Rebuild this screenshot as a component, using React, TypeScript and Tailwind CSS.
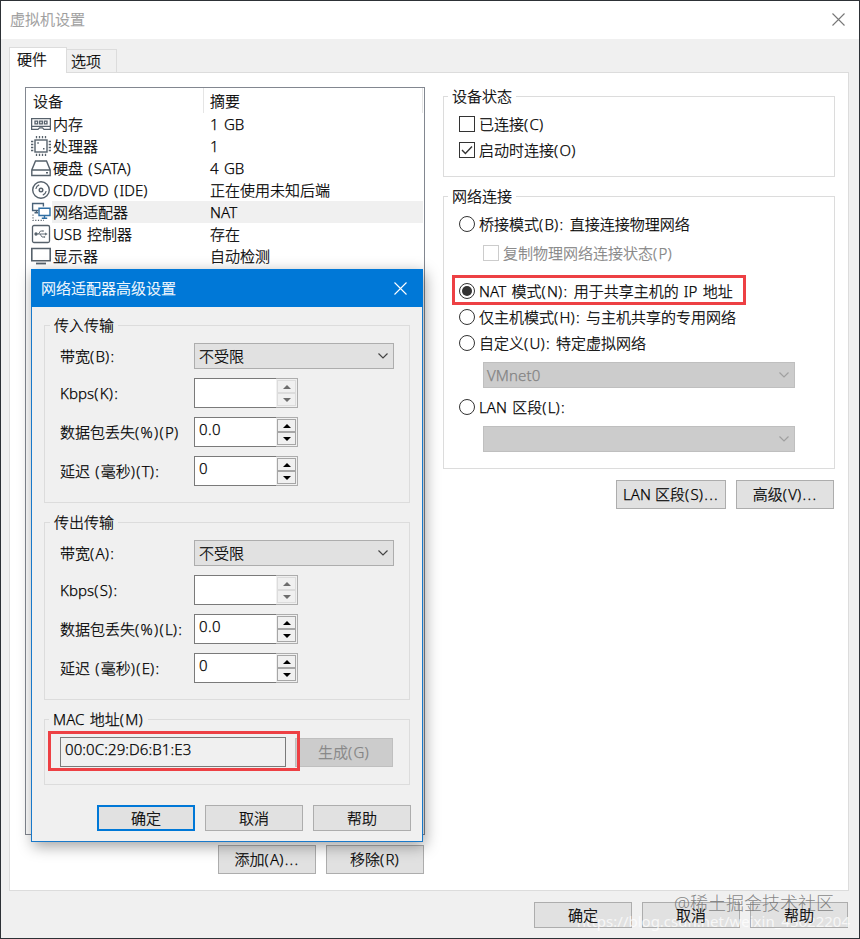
import type { ReactNode } from 'react';

/** Sets Latin runs and punctuation a little wider than the ideographs around them. */
function Text({ children, className = '' }: { children: string; className?: string }) {
  const runs = children.split(/([()]+:?|\.\.\.|%|[A-Za-z0-9/:]+)/).filter(Boolean);
  return (
    <span className={`whitespace-pre ${className}`}>
      {runs.map((run, i) => {
        if (/^([()]+:?|\.\.\.|%)$/.test(run)) return <span key={i} className="tracking-[1.3px]">{run}</span>;
        if (/^[A-Za-z0-9/:.]+$/.test(run)) return <span key={i} className="tracking-[0.1px]">{run}</span>;
        return run;
      })}
    </span>
  );
}

function Button({ children, className }: { children: string; className: string }) {
  return (
    <button className={`flex shrink-0 items-center justify-center whitespace-nowrap ${className}`}>
      <Text className="relative z-10">{children}</Text>
    </button>
  );
}

function Group({ title, legend, className, children }: { title: string; legend: string; className: string; children: ReactNode }) {
  return (
    <section className={`flex shrink-0 flex-col border ${className}`}>
      <h2 className={`-mt-[11px] h-5 self-start px-1 leading-5 ${legend}`}><Text>{title}</Text></h2>
      {children}
    </section>
  );
}

function Chevron({ color }: { color: string }) {
  return (
    <svg width="12" height="8" viewBox="0 0 12 8" fill="none" stroke={color} strokeWidth="1.2">
      <path d="M1.5 1.5 6 6l4.5-4.5" />
    </svg>
  );
}

function Select({ value, className, color }: { value: string; className: string; color: string }) {
  return (
    <div className={`flex h-[26px] shrink-0 items-center justify-between border pr-1 ${className}`}>
      <Text>{value}</Text>
      <Chevron color={color} />
    </div>
  );
}

function Arrow({ up, disabled }: { up: boolean; disabled: boolean }) {
  return (
    <span className={`flex flex-1 items-center justify-center border ${disabled ? 'border-[#dcdcdc] bg-[#f0f0f0]' : 'border-[#a6a6a6] bg-[#f0f0f0]'}`}>
      <svg width="8" height="4" viewBox="0 0 8 4" fill={disabled ? '#6d6d6d' : '#000'}>
        <path d={up ? 'M0 4 4 0l4 4z' : 'M0 0h8L4 4z'} />
      </svg>
    </span>
  );
}

function Spinner({ value, disabled = false }: { value: string; disabled?: boolean }) {
  return (
    <div className="flex h-[30px] w-[104px]">
      <span className="w-[82px] border border-r-0 border-[#7a7a7a] bg-white pl-1 leading-[22px] tracking-[0.4px]">{value}</span>
      <span className="flex w-[22px] flex-col border border-l-0 border-[#adadad] bg-[#f0f0f0] p-px">
        <Arrow up disabled={disabled} />
        <Arrow up={false} disabled={disabled} />
      </span>
    </div>
  );
}

function Transfer({ title, labels, className }: { title: string; labels: string[]; className: string }) {
  return (
    <Group title={title} legend="ml-[5px] bg-[#f0f0f0]" className={`h-[178px] w-[366px] border-[#dcdcdc] ${className}`}>
      <div className="mt-2 ml-[15px] flex flex-col">
        <div className="flex h-[26px] items-center">
          <Text className="w-[134px]">{labels[0]}</Text>
          <Select value="不受限" color="#444" className="w-[200px] border-[#adadad] bg-[#e1e1e1] pl-1" />
        </div>
        <div className="mt-[9px] flex h-[30px] items-center">
          <Text className="w-[134px]">{labels[1]}</Text>
          <Spinner value="" disabled />
        </div>
        <div className="mt-[9px] flex h-[30px] items-center">
          <Text className="w-[134px]">{labels[2]}</Text>
          <Spinner value="0.0" />
        </div>
        <div className="mt-[9px] flex h-[30px] items-center">
          <Text className="w-[134px]">{labels[3]}</Text>
          <Spinner value="0" />
        </div>
      </div>
    </Group>
  );
}

function Box({ checked = false, disabled = false }: { checked?: boolean; disabled?: boolean }) {
  return (
    <span className={`flex size-4 shrink-0 items-center justify-center border bg-white ${disabled ? 'border-[#ccc]' : 'border-[#333]'}`}>
      {checked && (
        <svg width="14" height="14" viewBox="0 0 14 14" fill="none" stroke="#333" strokeWidth="1.4">
          <path d="m2 7 3.4 3.4L12 3.6" />
        </svg>
      )}
    </span>
  );
}

function Radio({ checked = false }: { checked?: boolean }) {
  return (
    <span className="flex size-4 shrink-0 items-center justify-center rounded-full border border-[#333] bg-white">
      {checked && <span className="size-[10px] rounded-full bg-[#333]" />}
    </span>
  );
}

function Option({ control, text, className }: { control: ReactNode; text: string; className: string }) {
  return (
    <label className={`flex h-5 shrink-0 items-center gap-1 whitespace-nowrap ${className}`}>
      {control}
      <Text>{text}</Text>
    </label>
  );
}

const stroke = '#56616b';

const icons: Record<string, ReactNode> = {
  memory: (
    <g strokeWidth="1.3">
      <path d="M.6 4.6h18.8v10.8h-6.4l-1.5-1.6h-3L7 15.4H.6zM1 12.4h18" />
      <path d="M4 7.2h2.6v2.6H4zM8.7 7.2h2.6v2.6H8.7zM13.4 7.2H16v2.6h-2.6z" />
    </g>
  ),
  cpu: (
    <g>
      <rect x="4" y="4" width="12" height="12" />
      <path strokeWidth="1.3" d="M5.5 0v2.3M8.5 0v2.3M11.5 0v2.3M14.5 0v2.3M5.5 17.7V20M8.5 17.7V20M11.5 17.7V20M14.5 17.7V20M0 5.5h2.3M0 8.5h2.3M0 11.5h2.3M0 14.5h2.3M17.7 5.5H20M17.7 8.5H20M17.7 11.5H20M17.7 14.5H20" />
      <path d="M6.3 7h1.5M12 12.7h1.5" />
    </g>
  ),
  disk: (
    <g strokeWidth="1.4">
      <path d="M4.5 3h11L19.2 12v5.5H.8V12zM1 12h18" />
      <path d="M15 14.8h2" />
    </g>
  ),
  cd: (
    <g strokeWidth="1.4">
      <circle cx="10" cy="10" r="8.3" />
      <circle cx="10" cy="10" r="1.8" />
      <path strokeWidth="1.2" d="M4.8 8.8A5.4 5.4 0 0 1 8.2 4.9M15.2 11.2A5.4 5.4 0 0 1 11.8 15.1" />
    </g>
  ),
  network: (
    <g strokeWidth="1.4">
      <path stroke="#4a6278" d="M7.5 8.5H1.6v-7h10.8v3M3.5 10.7h3.5M5.5 8.5v2" />
      <path stroke="#2f6ea3" d="M8 6.2h11v7.3H8zM13.5 13.5v2.6M10.8 16.3h5.4" />
      <path strokeWidth="1.1" strokeDasharray="1.2 1.5" d="M2 12.5v5.9h11" />
    </g>
  ),
  usb: (
    <g strokeWidth="1.3">
      <rect x="1.5" y="1.5" width="17" height="17" rx="1.5" />
      <path strokeWidth=".9" d="M5 10h10M7.5 10l2-3h2M9 10l2 3h2" />
      <circle cx="5" cy="10" r="1" fill={stroke} />
      <path fill={stroke} d="m14.3 8.7 2 1.3-2 1.3zM11.5 6.5h1v1h-1zM13 12.5h1v1h-1z" strokeWidth=".3" />
    </g>
  ),
  display: (
    <g>
      <path strokeWidth="1.6" d="M.8 2.5h18.4v12.2H.8z" />
      <path strokeWidth="1.8" d="M5 17.5h10" />
    </g>
  ),
};

const devices = [
  ['memory', '内存', '1 GB'],
  ['cpu', '处理器', '1'],
  ['disk', '硬盘 (SATA)', '4 GB'],
  ['cd', 'CD/DVD (IDE)', '正在使用未知后端'],
  ['network', '网络适配器', 'NAT'],
  ['usb', 'USB 控制器', '存在'],
  ['display', '显示器', '自动检测'],
];

function DeviceList() {
  return (
    <div className="flex h-[748px] w-[400px] shrink-0 flex-col border border-[#828790] bg-white pr-px">
      <div className="flex h-[25px] items-center">
        <span className="flex h-full w-[178px] items-center border-r border-[#e5e5e5] pt-px pl-[7px]">设备</span>
        <span className="flex h-full flex-1 items-center border-r border-[#e5e5e5] pt-px pl-[6px]">摘要</span>
      </div>
      {devices.map(([icon, name, summary]) => (
        <div key={icon} className="flex h-[22px] items-center pl-[5px]">
          <svg className="mr-px shrink-0" width="20" height="20" viewBox="0 0 20 20" fill="none" stroke={stroke} strokeWidth="1.4">
            {icons[icon]}
          </svg>
          <div className={`flex h-full flex-1 items-center pl-px ${icon === 'network' ? 'bg-[#f0f0f0]' : ''}`}>
            <Text className="w-[157px]">{name}</Text>
            <Text>{summary}</Text>
          </div>
        </div>
      ))}
    </div>
  );
}

const plain = 'border border-[#adadad] bg-[#e1e1e1] w-[98px]';

function AdvancedDialog() {
  return (
    <div className="absolute top-[268px] left-[30px] flex h-[573px] w-[392px] flex-col border border-[#1979ca] bg-[#f0f0f0] shadow-[2px_4px_14px_rgba(0,0,0,0.38)]">
      <div className="-mx-px -mt-px flex h-[38px] shrink-0 items-center justify-between bg-[#0078d7] pr-4 pl-[10px] text-white">
        <span>网络适配器高级设置</span>
        <svg width="13" height="13" viewBox="0 0 13 13" stroke="#fff" strokeWidth="1.1">
          <path d="m.5.5 12 12M12.5.5l-12 12" />
        </svg>
      </div>
      <Transfer title="传入传输" labels={['带宽(B):', 'Kbps(K):', '数据包丢失(%)(P)', '延迟 (毫秒)(T):']} className="mt-[18px] ml-3" />
      <Transfer title="传出传输" labels={['带宽(A):', 'Kbps(S):', '数据包丢失(%)(L):', '延迟 (毫秒)(E):']} className="mt-[19px] ml-3" />
      <Group title="MAC 地址(M)" legend="ml-1 bg-[#f0f0f0]" className="mt-[19px] ml-3 h-[66px] w-[366px] border-[#dcdcdc]">
        <div className="mt-2 ml-[15px] flex items-start">
          <span className="h-[30px] w-[226px] border border-[#7a7a7a] pl-1 leading-[23px]"><Text>00:0C:29:D6:B1:E3</Text></span>
          <Button className="mt-px ml-[9px] h-[29px] w-[98px] border border-[#bfbfbf] bg-[#ccc] pb-[2px] text-[#838383]">生成(G)</Button>
        </div>
      </Group>
      <div className="mt-5 mr-[11px] flex justify-end gap-[10px]">
        <Button className="h-[26px] w-[98px] border-2 border-[#0078d7] bg-[#e1e1e1]">确定</Button>
        <Button className={`h-[26px] ${plain}`}>取消</Button>
        <Button className={`h-[26px] ${plain}`}>帮助</Button>
      </div>
      <div className="absolute top-[461px] left-4 h-10 w-[252px] border-3 border-[#ed4044]" />
    </div>
  );
}

export default function App() {
  return (
    <div className="relative flex h-[939px] w-[860px] flex-col overflow-hidden border border-[#2d3136] bg-[#f0f0f0] font-['Noto_Sans','Noto_Sans_CJK_SC',sans-serif] text-[15px] leading-5 font-light [word-spacing:1.3px] [-webkit-text-stroke:0.25px] text-black">
      <header className="flex h-[38px] shrink-0 items-center justify-between bg-white pr-[14px] pb-[2px] pl-[9px] text-[#999]">
        <span>虚拟机设置</span>
        <svg width="13" height="13" viewBox="0 0 13 13" stroke="#777" strokeWidth="1.1">
          <path d="m.5.5 12 12M12.5.5l-12 12" />
        </svg>
      </header>
      <nav className="flex h-[33px] shrink-0 items-end pl-2">
        <div className="z-10 -mb-px flex h-[26px] w-[58px] items-center border border-b-0 border-[#dcdcdc] bg-white pb-[3px] pl-[7px]">硬件</div>
        <div className="flex h-[23px] w-[50px] items-center border border-b-0 border-l-0 border-[#dcdcdc] pl-1">选项</div>
      </nav>
      <main className="ml-2 flex h-[819px] w-[840px] shrink-0 items-start border border-[#dcdcdc] bg-white pt-[14px] pl-[15px]">
        <div className="flex flex-col">
          <DeviceList />
          <div className="mt-[10px] mr-px flex justify-end gap-[10px]">
            <Button className={`h-[29px] pb-[2px] ${plain}`}>添加(A)...</Button>
            <Button className={`h-[29px] pb-[2px] ${plain}`}>移除(R)</Button>
          </div>
        </div>
        <div className="mt-[9px] ml-[18px] flex w-[392px] flex-col">
          <Group title="设备状态" legend="ml-1 bg-white" className="h-[81px] border-[#dcdcdc]">
            <Option className="mt-2 ml-[15px]" control={<Box />} text="已连接(C)" />
            <Option className="mt-[6px] ml-[15px]" control={<Box checked />} text="启动时连接(O)" />
          </Group>
          <Group title="网络连接" legend="ml-1 bg-white" className="mt-[19px] h-[273px] border-[#dcdcdc]">
            <Option className="mt-2 ml-[15px]" control={<Radio />} text="桥接模式(B): 直接连接物理网络" />
            <Option className="mt-[9px] ml-[39px] text-[#838383]" control={<Box disabled />} text="复制物理网络连接状态(P)" />
            <div className="relative mt-[18px] flex pl-[15px]">
              <Option className="" control={<Radio checked />} text="NAT 模式(N): 用于共享主机的 IP 地址" />
              <div className="absolute -top-[6px] left-2 h-[30px] w-[294px] border-3 border-[#ed4044]" />
            </div>
            <Option className="mt-[6px] ml-[15px]" control={<Radio />} text="仅主机模式(H): 与主机共享的专用网络" />
            <Option className="mt-[6px] ml-[15px]" control={<Radio />} text="自定义(U): 特定虚拟网络" />
            <Select value="VMnet0" color="#a0a0a0" className="mt-[9px] ml-[39px] w-[312px] border-[#bfbfbf] bg-[#ccc] pl-[3px] text-[#838383]" />
            <Option className="mt-[9px] ml-[15px]" control={<Radio />} text="LAN 区段(L):" />
            <Select value="" color="#a0a0a0" className="mt-[9px] ml-[39px] w-[312px] border-[#bfbfbf] bg-[#ccc]" />
          </Group>
          <div className="mt-[11px] mr-px flex justify-end gap-[10px]">
            <Button className="h-[29px] w-[110px] border border-[#adadad] bg-[#e1e1e1] pb-[2px]">LAN 区段(S)...</Button>
            <Button className={`h-[29px] pb-[2px] ${plain}`}>高级(V)...</Button>
          </div>
        </div>
      </main>
      <footer className="mt-[11px] mr-[11px] flex justify-end gap-[10px]">
        <Button className={`h-[26px] ${plain}`}>确定</Button>
        <Button className={`h-[26px] ${plain}`}>取消</Button>
        <Button className={`h-[26px] ${plain}`}>帮助</Button>
      </footer>
      <AdvancedDialog />
      <div className="absolute top-[890px] left-[673px] text-[18px] leading-6 whitespace-nowrap text-[#777]/90 [-webkit-text-stroke:0]">@稀土掘金技术社区</div>
      <div className="absolute top-[908px] right-[9px] text-[15px] leading-6 font-normal whitespace-nowrap text-white/75 [-webkit-text-stroke:0]">https://blog.csdn.net/weixin_43622204</div>
    </div>
  );
}
